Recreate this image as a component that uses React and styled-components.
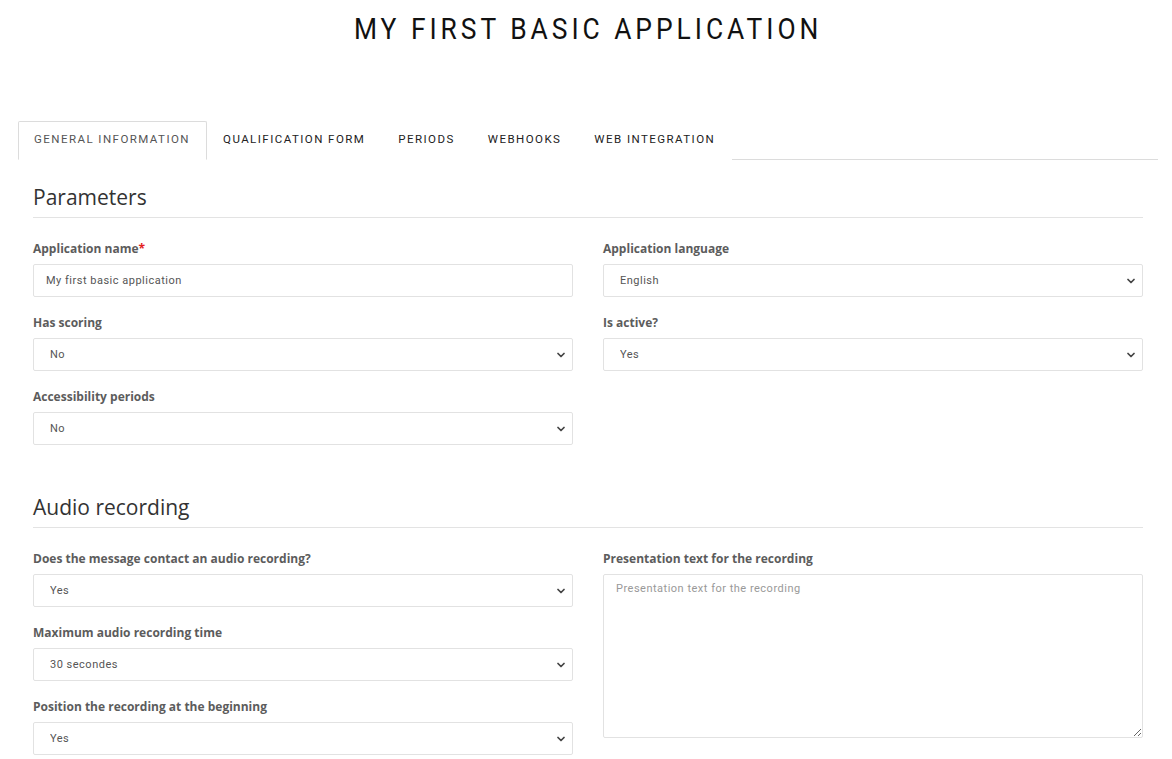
import React from 'react'
import styled, { createGlobalStyle } from 'styled-components'
import { ChevronDown } from 'lucide-react'

const GlobalStyle = createGlobalStyle`
  * { box-sizing: border-box; }
  body {
    margin: 0;
    background: #fff;
    font-family: "Open Sans", "Liberation Sans", sans-serif;
  }
`

const Page = styled.div`
  width: 1140px;
  margin-left: 18px;
`

const Title = styled.h1`
  margin: 0;
  padding-top: 11px;
  text-align: center;
  font-family: Roboto, "Liberation Sans", sans-serif;
  font-weight: 400;
  font-size: 30px;
  line-height: 36px;
  color: #111;
`

// Roboto squeezed a little to come near the condensed face of the original
const TitleText = styled.span`
  display: inline-block;
  letter-spacing: 4.5px;
  transform: scaleX(0.88);
`

const Tabs = styled.ul`
  display: flex;
  list-style: none;
  margin: 74px 0 0;
  padding: 0;
  border-bottom: 1px solid #dcdcdc;
`

const Tab = styled.li`
  margin-bottom: -1px;
  padding: 8px 16px 11px 15px;
  font-family: Roboto, "Liberation Sans", sans-serif;
  font-size: 11.5px;
  line-height: 18px;
  letter-spacing: 1.45px;
  color: ${p => (p.$active ? '#555' : '#222')};
  border: 1px solid ${p => (p.$active ? '#dcdcdc' : 'transparent')};
  border-bottom-color: ${p => (p.$active ? '#fff' : 'transparent')};
  background: #fff;
  border-radius: 2px 2px 0 0;
`

const Content = styled.div`
  padding: 0 15px;
`

const Section = styled.section`
  margin-bottom: 33px;
`

const Heading = styled.h2`
  margin: 24px 0 0;
  padding-bottom: 7px;
  border-bottom: 1px solid #e3e3e3;
  font-size: 21px;
  line-height: 26px;
  font-weight: 400;
  color: #333;
`

const Row = styled.div`
  display: grid;
  grid-template-columns: 540px 540px;
  column-gap: 30px;
  padding-top: 21px;
`

const Col = styled.div`
  display: flex;
  flex-direction: column;
`

const Group = styled.div`
  margin-bottom: 16px;
`

const Label = styled.label`
  display: block;
  margin-bottom: 5px;
  font-size: 12px;
  line-height: 20px;
  font-weight: 700;
  color: #5c5c5c;
`

const Required = styled.span`
  color: #e32020;
`

const fieldBase = `
  width: 100%;
  border: 1px solid #e2e2e2;
  border-radius: 2px;
  background: #fff;
  font-family: Roboto, "Liberation Sans", sans-serif;
  font-size: 11px;
  letter-spacing: 0.5px;
  color: #555;
  outline: none;
`

const Input = styled.input`
  ${fieldBase}
  height: 33px;
  padding: 0 12px;
`

const SelectWrap = styled.div`
  position: relative;
`

const Select = styled.select`
  ${fieldBase}
  appearance: none;
  height: 33px;
  padding: 0 12px 0 16px;
`

const Chevron = styled(ChevronDown)`
  position: absolute;
  right: 6px;
  top: 11px;
  pointer-events: none;
  color: #444;
`

const TextArea = styled.textarea`
  ${fieldBase}
  display: block;
  height: 164px;
  padding: 7px 12px;
  resize: vertical;
  &::placeholder {
    color: #999;
  }
`

function SelectField({ label, value, options }) {
  return (
    <Group>
      <Label>{label}</Label>
      <SelectWrap>
        <Select defaultValue={value}>
          {options.map(o => (
            <option key={o}>{o}</option>
          ))}
        </Select>
        <Chevron size={12} strokeWidth={3.5} />
      </SelectWrap>
    </Group>
  )
}

const tabs = ['GENERAL INFORMATION', 'QUALIFICATION FORM', 'PERIODS', 'WEBHOOKS', 'WEB INTEGRATION']

export default function App() {
  return (
    <>
      <GlobalStyle />
      <Page>
        <Title><TitleText>MY FIRST BASIC APPLICATION</TitleText></Title>
        <Tabs>
          {tabs.map((t, i) => (
            <Tab key={t} $active={i === 0}>{t}</Tab>
          ))}
        </Tabs>
        <Content>
          <Section>
            <Heading>Parameters</Heading>
            <Row>
              <Col>
                <Group>
                  <Label>Application name<Required>*</Required></Label>
                  <Input defaultValue="My first basic application" />
                </Group>
                <SelectField label="Has scoring" value="No" options={['No', 'Yes']} />
                <SelectField label="Accessibility periods" value="No" options={['No', 'Yes']} />
              </Col>
              <Col>
                <SelectField label="Application language" value="English" options={['English', 'Français']} />
                <SelectField label="Is active?" value="Yes" options={['Yes', 'No']} />
              </Col>
            </Row>
          </Section>
          <Section>
            <Heading>Audio recording</Heading>
            <Row>
              <Col>
                <SelectField label="Does the message contact an audio recording?" value="Yes" options={['Yes', 'No']} />
                <SelectField label="Maximum audio recording time" value="30 secondes" options={['30 secondes', '60 secondes']} />
                <SelectField label="Position the recording at the beginning" value="Yes" options={['Yes', 'No']} />
              </Col>
              <Col>
                <Group>
                  <Label>Presentation text for the recording</Label>
                  <TextArea placeholder="Presentation text for the recording" />
                </Group>
              </Col>
            </Row>
          </Section>
        </Content>
      </Page>
    </>
  )
}
